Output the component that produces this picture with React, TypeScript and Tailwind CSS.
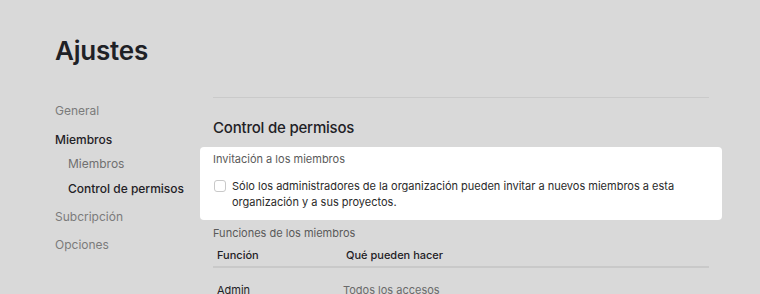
export default function App() {
  return (
    <div className="h-screen overflow-hidden bg-[#d9d9d9] pl-[55px] pt-[33px] text-[#1f2126]" style={{ fontFamily: 'Inter, "Noto Sans", sans-serif' }}>
      <h1 className="text-[26px] font-semibold leading-[36px] tracking-[-0.2px]">Ajustes</h1>
      <div className="mt-[28px] flex">
        {/* sidebar */}
        <nav className="flex w-[158px] shrink-0 flex-col pt-[6px] text-[12px] leading-4">
          <span className="text-[#7b7b7b]">General</span>
          <span className="mt-[13px] font-medium">Miembros</span>
          <div className="mt-2 flex flex-col gap-[9px] pl-[13px]">
            <span className="text-[#707070]">Miembros</span>
            <span className="font-medium">Control de permisos</span>
          </div>
          <span className="mt-3 text-[#7b7b7b]">Subcripción</span>
          <span className="mt-3 text-[#7b7b7b]">Opciones</span>
        </nav>

        {/* main */}
        <main className="w-[496px] border-t border-[#cacaca] pt-[18px]">
          <h2 className="text-[15px] font-medium leading-6 tracking-[-0.2px]">Control de permisos</h2>
          <section className="-mx-[13px] mt-[7px] rounded-[4px] bg-white px-[13px] pb-[10px] pt-1">
            <p className="text-[11px] leading-4 text-[#5a5a5a]">Invitación a los miembros</p>
            <label className="mt-[11px] flex items-start gap-[6px]">
              <span className="ml-[1px] mt-[2px] h-3 w-3 shrink-0 rounded-[3px] border border-[#c9c9c9] bg-white" />
              <span className="text-[11px] leading-4 text-[#2a2a2a]">
                Sólo los administradores de la organización pueden invitar a nuevos miembros a esta organización y a sus proyectos.
              </span>
            </label>
          </section>
          <p className="mt-[5px] text-[11px] leading-4 text-[#5a5a5a]">Funciones de los miembros</p>
          <div className="mt-[3px] flex h-6 items-center border-b-2 border-[#c9c9c9] pl-1 text-[11px] font-medium">
            <span className="w-[129px]">Función</span>
            <span>Qué pueden hacer</span>
          </div>
          <div className="flex h-[44px] items-center pl-1 text-[11px]">
            <span className="w-[126px]">Admin</span>
            <span className="text-[#6a6a6a]">Todos los accesos</span>
          </div>
        </main>
      </div>
    </div>
  );
}
